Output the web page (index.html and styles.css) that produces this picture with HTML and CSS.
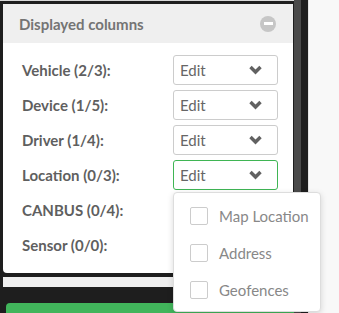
FILE: index.html
```html
<!DOCTYPE html>
<html lang="en">

<head>
    <meta charset="UTF-8">
    <meta name="viewport" content="width=device-width, initial-scale=1.0">
    <title>Displayed columns</title>
    <link rel="stylesheet" href="styles.css">
</head>

<body>
    <div class="page">
        <div class="left">
            <div class="panel">
                <div class="panel-head">
                    <span>Displayed columns</span>
                    <span class="collapse"></span>
                </div>
                <div class="panel-body">
                    <div class="row">
                        <label>Vehicle (2/3):</label>
                        <div class="select">Edit<svg class="chev" viewBox="0 0 14 10"><path d="M2 2 L7 7 L12 2" /></svg></div>
                    </div>
                    <div class="row">
                        <label>Device (1/5):</label>
                        <div class="select">Edit<svg class="chev" viewBox="0 0 14 10"><path d="M2 2 L7 7 L12 2" /></svg></div>
                    </div>
                    <div class="row">
                        <label>Driver (1/4):</label>
                        <div class="select">Edit<svg class="chev" viewBox="0 0 14 10"><path d="M2 2 L7 7 L12 2" /></svg></div>
                    </div>
                    <div class="row">
                        <label>Location (0/3):</label>
                        <div class="select open">Edit<svg class="chev" viewBox="0 0 14 10"><path d="M2 2 L7 7 L12 2" /></svg></div>
                    </div>
                    <div class="row">
                        <label>CANBUS (0/4):</label>
                    </div>
                    <div class="row">
                        <label>Sensor (0/0):</label>
                    </div>
                </div>
            </div>
            <div class="strip"></div>
            <div class="btn-bar"></div>
        </div>
        <div class="scroll"></div>
        <div class="gap"></div>
        <div class="side"></div>

        <ul class="menu">
            <li><span class="box"></span>Map Location</li>
            <li><span class="box"></span>Address</li>
            <li><span class="box"></span>Geofences</li>
        </ul>
    </div>
</body>

</html>
```

FILE: styles.css
```css
* {
    margin: 0;
    padding: 0;
    box-sizing: border-box;
}

ul {
    list-style: none;
}

body {
    background: #1e1e1e;
    font-family: Lato, "Noto Sans", sans-serif;
    font-size: 15px;
    overflow: hidden;
}

.page {
    display: flex;
    height: 313px;
    position: relative;
}

.left {
    width: 294px;
    padding: 3px 0 0 3px;
    border-top: 1px solid #d8d8d8;
}

.panel {
    width: 290px;
    background: #fff;
    border-radius: 0 0 4px 4px;
}

.panel-head {
    height: 39px;
    background: #efefef;
    display: flex;
    align-items: center;
    justify-content: space-between;
    padding: 0 17px 0 16px;
    color: #747474;
    font-weight: bold;
}

.collapse {
    width: 16px;
    height: 16px;
    border-radius: 50%;
    background: #c6c6c6;
    display: flex;
    align-items: center;
    justify-content: center;
}

.collapse::after {
    content: "";
    width: 9px;
    height: 3px;
    background: #fff;
}

.panel-body {
    padding: 12px 15px 13px 19px;
    display: flex;
    flex-direction: column;
    gap: 5px;
}

.row {
    height: 30px;
    display: flex;
    align-items: center;
    justify-content: space-between;
}

.row label {
    color: #5f5f5f;
    font-weight: bold;
}

.select {
    width: 105px;
    height: 30px;
    border: 1px solid #ccc;
    border-radius: 3px;
    display: flex;
    align-items: center;
    justify-content: space-between;
    padding: 0 14px 0 6px;
    color: #666;
}

.select.open {
    border-color: #3fb554;
}

.chev {
    width: 15px;
    height: 10px;
}

.chev path {
    fill: none;
    stroke: #616161;
    stroke-width: 3.4;
}

.strip {
    height: 10px;
    margin-top: 4px;
    width: 290px;
    background: #efefef;
}

.btn-bar {
    margin: 16px 0 0 3px;
    width: 292px;
    height: 30px;
    background: #41b55b;
    border-radius: 4px 4px 0 0;
}

.scroll {
    width: 7px;
    background: #4a4a4a;
}

.gap {
    width: 7px;
}

.side {
    flex: 1;
    background: #f8f8f8;
    border-left: 1px solid #e4e4e4;
}

.menu {
    position: absolute;
    left: 173px;
    top: 192px;
    width: 148px;
    height: 120px;
    background: #fff;
    border: 1px solid #ddd;
    border-radius: 4px;
    box-shadow: 0 2px 6px rgba(0, 0, 0, .15);
    padding: 4px 0;
}

.menu li {
    height: 37px;
    display: flex;
    align-items: center;
    padding-left: 16px;
    color: #888;
}

.box {
    width: 18px;
    height: 18px;
    border: 1px solid #ccc;
    border-radius: 2px;
    margin-right: 11px;
}
```
